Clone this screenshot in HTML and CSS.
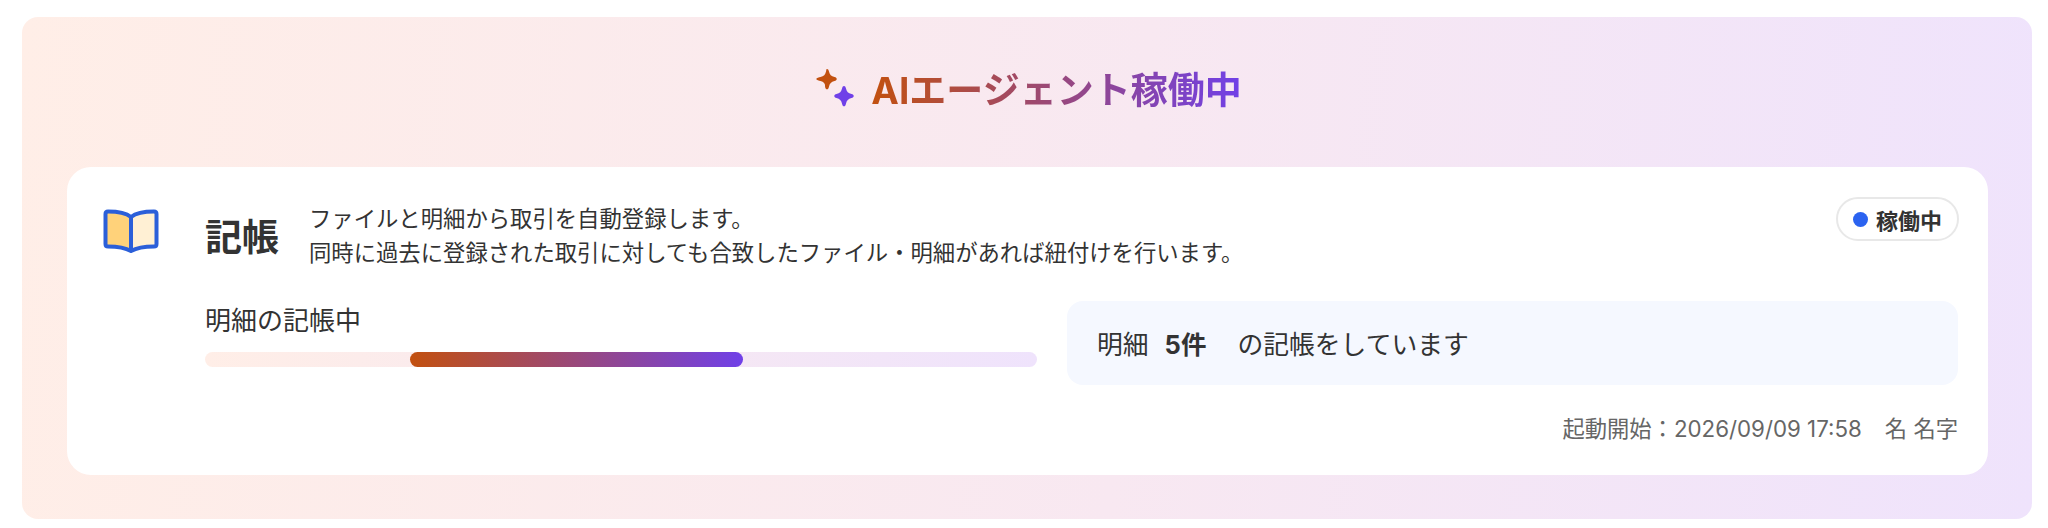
FILE: index.html
```html
<!DOCTYPE html>
<html lang="ja">
<head>
  <meta charset="UTF-8">
  <title>AIエージェント稼働中</title>
  <link rel="stylesheet" href="styles.css">
</head>
<body>
  <section class="panel">
    <h1 class="panel-title">
      <svg class="sparkle" width="38" height="38" viewBox="0 0 38 38">
        <path fill="#c2500f" d="M11 0c1 .0 1.500 .8 1.900 2.300.8 3.400 2.300 5 5.600 5.800 1.400.4 2.200 1 2.200 2s-.8 1.600-2.200 2c-3.300.8-4.800 2.400-5.600 5.800-.4 1.500-.9 2.300-1.900 2.300s-1.500-.8-1.900-2.300C9.300 14.500 7.800 12.900 4.500 12.100 3.100 11.700 .3 11.100.3 10.100s2.800-1.600 4.200-2c3.300-.8 4.800-2.400 5.600-5.800C10.500.8 10 0 11 0z"/>
        <path fill="#7040e8" d="M28 17c1 0 1.500.8 1.900 2.300.8 3.400 2.300 5 5.600 5.800 1.400.4 2.200 1 2.200 2s-.8 1.600-2.200 2c-3.300.8-4.800 2.400-5.600 5.800-.4 1.500-.9 2.300-1.900 2.300s-1.500-.8-1.900-2.300c-.8-3.400-2.300-5-5.600-5.800-1.400-.4-2.200-1-2.200-2s.8-1.600 2.200-2c3.300-.8 4.800-2.400 5.600-5.800.4-1.500.9-2.300 1.900-2.300z"/>
      </svg>
      <span class="gradient-text">AIエージェント稼働中</span>
    </h1>

    <div class="card">
      <div class="card-head">
        <svg class="book" width="56" height="44" viewBox="0 0 56 44">
          <path fill="#ffd27a" d="M28 8C23 4 15 2.500 5 2.500 3.500 2.500 2.500 3.500 2.500 5v30c0 1.500 1 2.500 2.500 2.500 9 0 16 .5 23 4.500z"/>
          <path fill="#fff0d4" d="M28 8c5-4 13-5.500 23-5.500 1.500 0 2.500 1 2.500 2.500v30c0 1.500-1 2.500-2.500 2.500-9 0-16 .5-23 4.500z"/>
          <path fill="none" stroke="#2b5fd9" stroke-width="4" stroke-linejoin="round" d="M28 8C23 4 15 2.500 5 2.500 3.500 2.500 2.500 3.500 2.500 5v30c0 1.500 1 2.500 2.500 2.500 9 0 16 .5 23 4.500 7-4 14-4.500 23-4.500 1.500 0 2.500-1 2.500-2.500V5c0-1.500-1-2.500-2.500-2.500C41 2.500 33 4 28 8zm0 0v34"/>
        </svg>
        <h2 class="card-title">記帳</h2>
        <p class="card-desc">ファイルと明細から取引を自動登録します。<br>同時に過去に登録された取引に対しても合致したファイル・明細があれば紐付けを行います。</p>
        <span class="status"><i class="status-dot"></i>稼働中</span>
      </div>

      <div class="card-body">
        <div class="progress">
          <div class="progress-label">明細の記帳中</div>
          <div class="progress-track"><div class="progress-fill"></div></div>
        </div>
        <div class="message">
          <span>明細</span><strong class="message-count">5件</strong><span>の記帳をしています</span>
        </div>
      </div>

      <div class="card-foot">
        <span>起動開始：2026/09/09 17:58</span><span>名 名字</span>
      </div>
    </div>
  </section>
</body>
</html>
```

FILE: styles.css
```css
/* Reset */
* {
  box-sizing: border-box;
  margin: 0;
  padding: 0;
}
body {
  font-family: Inter, "Noto Sans CJK JP", sans-serif;
  background: #fff;
  color: #333;
  padding: 17px 16px 9px 22px;
}
/* Outer panel */
.panel {
  background: linear-gradient(95deg, #ffeee7 0%, #f8e8f1 55%, #efe3fc 100%);
  border-radius: 16px;
  padding: 0 44px 44px 45px;
}
.panel-title {
  height: 150px;
  display: flex;
  align-items: center;
  justify-content: center;
  gap: 17px;
  font-size: 37px;
  font-weight: 700;
  padding: 0 0 8px 3px;
}
.gradient-text {
  background: linear-gradient(90deg, #c2500f, #7040e8);
  -webkit-background-clip: text;
  background-clip: text;
  color: transparent;
}
/* Card */
.card {
  background: #fff;
  border-radius: 24px;
  padding: 30px 29px 31px 36px;
}
.card-head {
  display: flex;
  align-items: flex-start;
}
.book {
  margin-top: 12px;
  flex-shrink: 0;
}
.card-title {
  margin: 19px 30px 0 46px;
  font-size: 37px;
  line-height: 44px;
  font-weight: 700;
}
.card-desc {
  flex: 1;
  margin-top: 5px;
  font-size: 22.35px;
  line-height: 34px;
  color: #333;
}
.status {
  display: flex;
  align-items: center;
  gap: 8px;
  height: 44px;
  padding: 0 15px;
  border: 2px solid #e8e8e8;
  border-radius: 22px;
  font-size: 22px;
  font-weight: 700;
}
.status-dot {
  width: 15px;
  height: 15px;
  border-radius: 50%;
  background: #2b63f0;
}
/* Progress row */
.card-body {
  display: flex;
  gap: 30px;
  margin: 31px 1px 0 0;
  padding-left: 102px;
}
.progress {
  width: 832px;
  flex-shrink: 0;
}
.progress-label {
  padding-top: 3px;
  font-size: 26px;
  line-height: 34px;
  color: #333;
}
.progress-track {
  height: 15px;
  margin-top: 14px;
  border-radius: 8px;
  background: linear-gradient(90deg, #ffeee7, #efe3fc);
  padding-left: 205px;
}
.progress-fill {
  width: 333px;
  height: 100%;
  border-radius: 8px;
  background: linear-gradient(90deg, #c2500f, #7040e8);
}
.message {
  flex: 1;
  height: 84px;
  display: flex;
  align-items: center;
  padding: 0 30px 2px;
  border-radius: 16px;
  background: #f5f8ff;
  font-size: 25.8px;
}
.message-count {
  margin: 0 31px 0 16px;
  font-size: 25.5px;
}
/* Footer */
.card-foot {
  display: flex;
  justify-content: flex-end;
  gap: 23px;
  margin: 29px 1px 0 0;
  font-size: 22.3px;
  line-height: 30px;
  color: #666;
}
```
